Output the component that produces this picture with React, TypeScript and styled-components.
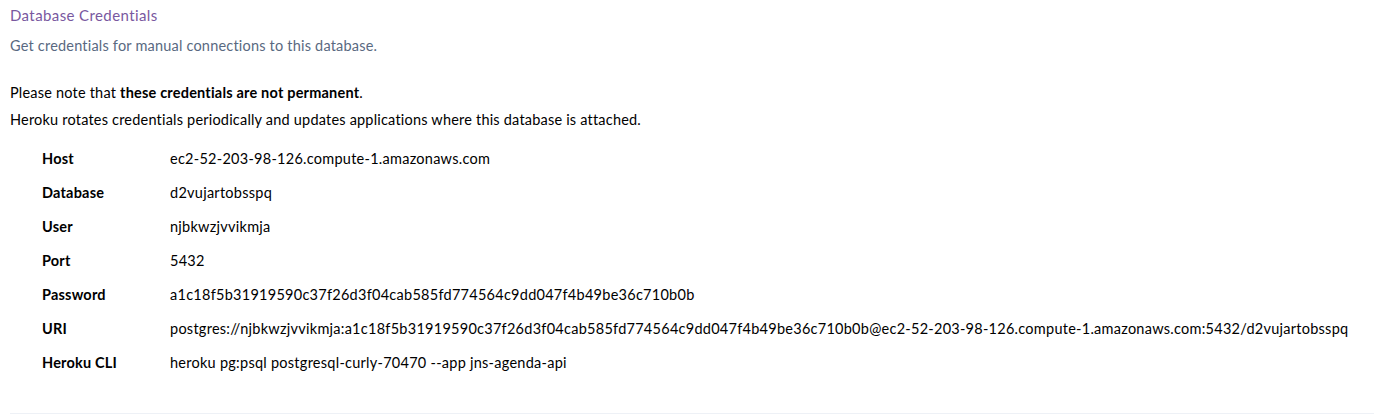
import styled, { createGlobalStyle } from 'styled-components';

const GlobalStyle = createGlobalStyle`
  html, body {
    margin: 0;
    padding: 0;
    background: #ffffff;
  }
  body {
    font-family: Lato, "Open Sans", sans-serif;
    font-size: 14.5px;
    letter-spacing: 0.2px;
    color: #000000;
  }
`;

const Wrapper = styled.section`
  padding: 0 0 0 10px;
`;
const Panel = styled.div`
  border-bottom: 1px solid #eef1f6;
  padding-bottom: 41px;
`;
const Title = styled.h3`
  margin: 0;
  padding-top: 6px;
  font-size: 15px;
  font-weight: 400;
  letter-spacing: 0.4px;
  line-height: 18px;
  color: #79589f;
`;
const Subtitle = styled.p`
  margin: 13px 0 0;
  line-height: 18px;
  color: #596981;
`;
const Notes = styled.div`
  margin-top: 29px;
  display: flex;
  flex-direction: column;
  gap: 9px;
`;
const Note = styled.p`
  margin: 0;
  line-height: 18px;
  color: #000000;
`;
const Credentials = styled.dl`
  margin: 21px 0 0 32px;
  display: grid;
  grid-template-columns: 128px 1fr;
  row-gap: 16px;
  line-height: 18px;
`;
const Label = styled.dt`
  font-weight: 700;
  color: #000000;
`;
const Value = styled.dd`
  margin: 0;
  color: #000000;
  letter-spacing: 0.26px;
  white-space: nowrap;
`;

const rows: [string, string][] = [
  ['Host', 'ec2-52-203-98-126.compute-1.amazonaws.com'],
  ['Database', 'd2vujartobsspq'],
  ['User', 'njbkwzjvvikmja'],
  ['Port', '5432'],
  ['Password', 'a1c18f5b31919590c37f26d3f04cab585fd774564c9dd047f4b49be36c710b0b'],
  [
    'URI',
    'postgres://njbkwzjvvikmja:a1c18f5b31919590c37f26d3f04cab585fd774564c9dd047f4b49be36c710b0b@ec2-52-203-98-126.compute-1.amazonaws.com:5432/d2vujartobsspq',
  ],
  ['Heroku CLI', 'heroku pg:psql postgresql-curly-70470 --app jns-agenda-api'],
];

export default function App() {
  return (
    <Wrapper>
      <GlobalStyle />
      <Panel>
        <Title>Database Credentials</Title>
        <Subtitle>Get credentials for manual connections to this database.</Subtitle>
        <Notes>
          <Note>
            Please note that <b>these credentials are not permanent</b>.
          </Note>
          <Note>
            Heroku rotates credentials periodically and updates applications where this database is
            attached.
          </Note>
        </Notes>
        <Credentials>
          {rows.map(([label, value]) => (
            <>
              <Label key={label + '-l'}>{label}</Label>
              <Value key={label + '-v'}>{value}</Value>
            </>
          ))}
        </Credentials>
      </Panel>
    </Wrapper>
  );
}
